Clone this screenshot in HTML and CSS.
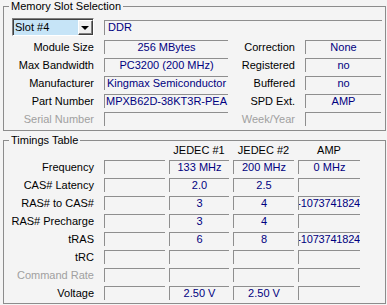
FILE: index.html
```html
<!DOCTYPE html>
<html lang="en">
<head>
  <meta charset="UTF-8">
  <title>SPD</title>
  <link rel="stylesheet" href="styles.css">
</head>
<body>
  <!-- slot selection -->
  <fieldset class="group slot">
    <legend>Memory Slot Selection</legend>
    <div class="slot-grid">
      <div class="combo">
        <span class="combo-text">Slot #4</span>
        <span class="combo-button"><span class="arrow"></span></span>
      </div>
      <div class="field wide">DDR</div>

      <span class="label">Module Size</span>
      <div class="field">256 MBytes</div>
      <span class="label">Correction</span>
      <div class="field">None</div>

      <span class="label">Max Bandwidth</span>
      <div class="field">PC3200 (200 MHz)</div>
      <span class="label">Registered</span>
      <div class="field">no</div>

      <span class="label">Manufacturer</span>
      <div class="field">Kingmax Semiconductor</div>
      <span class="label">Buffered</span>
      <div class="field">no</div>

      <span class="label">Part Number</span>
      <div class="field">MPXB62D-38KT3R-PEA</div>
      <span class="label">SPD Ext.</span>
      <div class="field">AMP</div>

      <span class="label disabled">Serial Number</span>
      <div class="field"></div>
      <span class="label disabled">Week/Year</span>
      <div class="field"></div>
    </div>
  </fieldset>

  <!-- timings -->
  <fieldset class="group timings">
    <legend>Timings Table</legend>
    <div class="timing-grid">
      <span></span>
      <span></span>
      <span class="head">JEDEC #1</span>
      <span class="head">JEDEC #2</span>
      <span class="head">AMP</span>

      <span class="label">Frequency</span>
      <div class="field"></div>
      <div class="field">133 MHz</div>
      <div class="field">200 MHz</div>
      <div class="field">0 MHz</div>

      <span class="label">CAS# Latency</span>
      <div class="field"></div>
      <div class="field">2.0</div>
      <div class="field">2.5</div>
      <div class="field"></div>

      <span class="label">RAS# to CAS#</span>
      <div class="field"></div>
      <div class="field">3</div>
      <div class="field">4</div>
      <div class="field long">-1073741824</div>

      <span class="label">RAS# Precharge</span>
      <div class="field"></div>
      <div class="field">3</div>
      <div class="field">4</div>
      <div class="field"></div>

      <span class="label">tRAS</span>
      <div class="field"></div>
      <div class="field">6</div>
      <div class="field">8</div>
      <div class="field long">-1073741824</div>

      <span class="label">tRC</span>
      <div class="field"></div>
      <div class="field"></div>
      <div class="field"></div>
      <div class="field"></div>

      <span class="label disabled">Command Rate</span>
      <div class="field"></div>
      <div class="field"></div>
      <div class="field"></div>
      <div class="field"></div>

      <span class="label">Voltage</span>
      <div class="field"></div>
      <div class="field">2.50 V</div>
      <div class="field">2.50 V</div>
      <div class="field"></div>
    </div>
  </fieldset>
</body>
</html>
```

FILE: styles.css
```css
/* base */
body {
  margin: 0;
  width: 387px;
  height: 305px;
  background: #f4f4f4;
  font-family: "Liberation Sans", Arial, sans-serif;
  font-size: 11px;
  color: #000;
  overflow: hidden;
}

/* group boxes */
.group {
  margin: 0 1px 0 3px;
  padding: 0;
  border: 1px solid #8c8c8c;
  min-inline-size: 0;
}

.group legend {
  margin-left: 5px;
  padding: 0 2px;
  line-height: 11px;
}

.slot {
  margin-top: 1px;
  padding: 6px 0 4px;
}

.timings {
  margin-top: 4px;
  padding: 0 0 3px;
}

/* grids */
.slot-grid {
  display: grid;
  grid-template-columns: 90px 124px 57px 76px;
  grid-auto-rows: 14px;
  grid-template-rows: 18px;
  column-gap: 10px;
  row-gap: 4px;
}

.timing-grid {
  display: grid;
  grid-template-columns: 96px 61px 60px 61px 62px;
  grid-template-rows: 10px;
  grid-auto-rows: 14px;
  column-gap: 4px;
  row-gap: 4px;
}

.timing-grid .label {
  padding-right: 6px;
}

.label {
  text-align: right;
  line-height: 14px;
  white-space: nowrap;
}

.label.disabled {
  color: #a0a0a0;
}

.head {
  text-align: center;
  line-height: 9px;
}

/* value fields */
.field {
  box-sizing: border-box;
  height: 14px;
  border-top: 1px solid #8e8e8e;
  border-left: 1px solid #8e8e8e;
  color: #000080;
  line-height: 13px;
  white-space: nowrap;
  overflow: hidden;
  display: flex;
  justify-content: center;
}

.field.long {
  justify-content: flex-end;
  letter-spacing: -0.2px;
}

.field.wide {
  grid-column: 2 / 5;
  align-self: center;
  height: 15px;
  justify-content: flex-start;
  padding-left: 3px;
  margin-right: -1px;
}

/* combo box */
.combo {
  box-sizing: border-box;
  margin-left: 8px;
  width: 82px;
  height: 18px;
  display: flex;
  border: 1px solid;
  border-color: #808080 #ffffff #ffffff #808080;
  box-shadow: inset 1px 1px 0 #404040;
  background: #ffffff;
}

.combo-text {
  flex: 1;
  margin: 1px 0 0 1px;
  padding-left: 1px;
  background: #c6e4f7;
  line-height: 15px;
}

.combo-button {
  box-sizing: border-box;
  width: 15px;
  margin-top: 1px;
  background: #f0f0f0;
  border: 1px solid;
  border-color: #ffffff #404040 #404040 #ffffff;
  box-shadow: inset -1px -1px 0 #808080;
  display: flex;
  align-items: center;
  justify-content: center;
}

.arrow {
  width: 0;
  height: 0;
  border-left: 4px solid transparent;
  border-right: 4px solid transparent;
  border-top: 4px solid #000;
  margin-right: 1px;
}
```
